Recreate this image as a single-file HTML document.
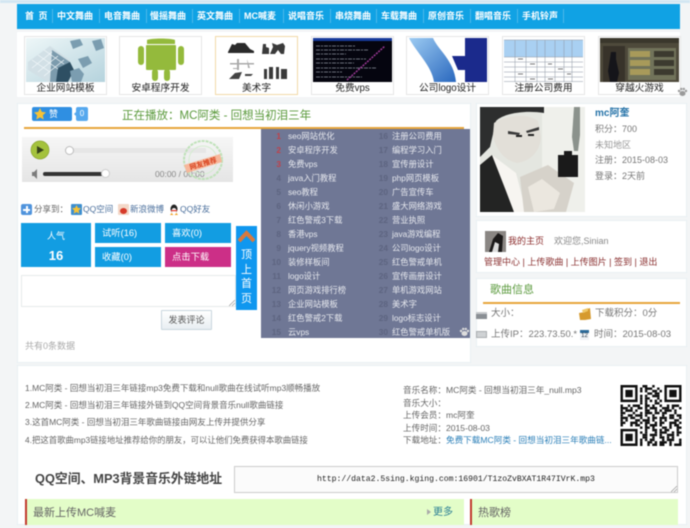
<!DOCTYPE html>
<html lang="zh"><head><meta charset="utf-8"><title>MC阿类 - 回想当初泪三年</title>
<style>
html,body{margin:0;padding:0;width:690px;height:528px;overflow:hidden;background:#f3f5f6}
#w{position:relative;width:690px;height:528px;overflow:hidden;font-family:"Liberation Sans","Noto Sans CJK SC",sans-serif;font-size:9px;color:#777;filter:blur(.4px)}
#w div,#w span,#w svg{position:absolute}
.t{white-space:nowrap;line-height:12px;height:12px}
.n{top:6px;color:#fff;font-weight:bold;font-size:9px}
.s{top:5px;width:1px;height:14px;background:#4db8ea}
.th{top:36px;width:81px;height:57px;background:#fff;border:1px solid #e6e6e6}
.th svg{left:1px;top:1px}
.c{left:0;right:0;top:45px;text-align:center;color:#222;font-size:9.7px;line-height:13px;white-space:nowrap}
.p{background:#fff;border:1px solid #e9f0f3;box-sizing:border-box}
.b{background:#129de2;color:#fff;font-size:9.3px;line-height:20px}
.pl{font-size:8.3px;color:#e6e8ee;white-space:nowrap;line-height:12px}
.pn{font-size:8.3px;color:#5d6480;font-weight:bold;text-align:right;width:14px;line-height:12px}
</style></head><body><div id="w">
<div style="left:0;top:0;width:690px;height:3px;background:#d3e6f2"></div>
<div style="left:17px;top:4px;width:663px;height:25px;background:#10a2e4"></div>
<div style="left:17px;top:4px;width:663px;height:25px">
<span class="t n" style="left:8px;letter-spacing:1px">首 页</span><span class="s" style="left:35px"></span>
<span class="t n" style="left:40px">中文舞曲</span><span class="s" style="left:82px"></span>
<span class="t n" style="left:87px">电音舞曲</span><span class="s" style="left:129px"></span>
<span class="t n" style="left:133px">慢摇舞曲</span><span class="s" style="left:175px"></span>
<span class="t n" style="left:180px">英文舞曲</span><span class="s" style="left:222px"></span>
<span class="t n" style="left:227px">MC喊麦</span><span class="s" style="left:266px"></span>
<span class="t n" style="left:271px">说唱音乐</span><span class="s" style="left:313px"></span>
<span class="t n" style="left:318px">串烧舞曲</span><span class="s" style="left:359px"></span>
<span class="t n" style="left:364px">车载舞曲</span><span class="s" style="left:406px"></span>
<span class="t n" style="left:411px">原创音乐</span><span class="s" style="left:453px"></span>
<span class="t n" style="left:458px">翻唱音乐</span><span class="s" style="left:500px"></span>
<span class="t n" style="left:505px">手机铃声</span><span class="s" style="left:546px"></span>
</div>
<div style="left:17px;top:32px;width:663px;height:65px;background:#fff"></div>

<div class="th" style="left:24px"><svg width="79" height="44" viewBox="0 0 79 44"><defs><linearGradient id="g1" x1="0" y1="0" x2="1" y2="1"><stop offset="0" stop-color="#eef7f8"/><stop offset="1" stop-color="#b5d3dd"/></linearGradient></defs><rect width="79" height="44" fill="url(#g1)"/><path d="M2 24L24 8 44 22 44 44 22 44 2 32z" fill="#d2e0e6"/><path d="M26 12L44 24 40 44 24 44z" fill="#7c9bad"/><path d="M32 30l12-6 4 8-6 12H30z" fill="#2e4f63"/><path d="M44 3l10-2 3 6-10 4zM66 3l9-2 3 9-8 3zM52 21l10-3 4 7-9 5zM44 33l9-3 5 6-3 8h-9z" fill="#7b9db0"/><path d="M6 22l18 12M12 17l20 14M18 12l20 14M6 30L26 14M12 34L32 18M18 38L38 22" stroke="#f2f8fa" stroke-width=".7" fill="none"/></svg><div class="c">企业网站模板</div></div>

<div class="th" style="left:119px"><svg width="79" height="44" viewBox="0 0 79 44"><rect width="79" height="44" fill="#fff"/><path d="M26 2c4-2 24-2 28 0v4H26z" fill="#94ba3c"/><rect x="25" y="7" width="30" height="25" rx="1" fill="#94ba3c"/><rect x="17" y="8" width="6" height="19" rx="3" fill="#94ba3c"/><rect x="57" y="8" width="6" height="19" rx="3" fill="#94ba3c"/><rect x="31" y="31" width="6" height="12" rx="3" fill="#94ba3c"/><rect x="43" y="31" width="6" height="12" rx="3" fill="#94ba3c"/></svg><div class="c">安卓程序开发</div></div>

<div class="th" style="left:215px;border-color:#f2d9a8"><svg width="79" height="44" viewBox="0 0 79 44"><rect width="79" height="44" fill="#fff"/><path d="M11 14l4-8 3 1 2-2h8l5 6 4 2v2H11z" fill="#2a2a2a"/><path d="M46 6h3v3l3 1v6h-7zM55 5l5 2 6-2 2 3-1 8h-3l-3-4-3 4h-5l3-7z" fill="#3a3a3a"/><path d="M13 25h24v1.500H13zM20 21h2v11h-2zM30 21l3 9h-2zM16 30h6v1H16z" fill="#aaa"/><path d="M12 41l6-6 7-1-3 7zM28 36h8l-2 2h-6z" fill="#444"/><path d="M47 31h3v10h-3zM52 29h4v12h-4zM59 29h3v12h-3zM64 31h6v10h-6z" fill="#3a3a3a"/></svg><div class="c">美术字</div></div>

<div class="th" style="left:311px"><svg width="79" height="44" viewBox="0 0 79 44"><rect width="79" height="44" fill="#05050f"/><rect width="79" height="3" fill="#173a9a"/><path d="M3 8h40M3 12h52M3 16h30M3 21h50M3 25h38M3 30h60M3 34h26M3 39h46" stroke="#6a707c" stroke-width="1" stroke-dasharray="4 1 2 1" fill="none"/><path d="M34 42L72 8" stroke="#a13a9a" stroke-width="1.500" stroke-dasharray="2 1"/></svg><div class="c">免费vps</div></div>

<div class="th" style="left:406px"><svg width="79" height="44" viewBox="0 0 79 44"><defs><linearGradient id="g2" x1="0" y1="0" x2="1" y2="1"><stop offset="0" stop-color="#9ccbf2"/><stop offset="1" stop-color="#2a68be"/></linearGradient></defs><rect width="79" height="44" fill="#fff"/><path d="M1 0H25C30 12 46 22 48 44H26C24 28 8 14 1 0z" fill="url(#g2)"/><path d="M57 0H79V44H57V32H50L44 18H57z" fill="#1b2a8c"/></svg><div class="c">公司logo设计</div></div>

<div class="th" style="left:502px"><svg width="79" height="44" viewBox="0 0 79 44"><rect width="79" height="44" fill="#fff"/><rect y="2" width="79" height="17" fill="#a9d0f2"/><path d="M0 2h79M0 19h79M0 24h79M0 29h79M0 34h79M0 39h79M0 43.500h79M11 2v42M22 2v42M33 2v42M41 2v42M51 2v42M60 2v42M68 2v42" stroke="#8a95a2" stroke-width=".5"/><path d="M14 21h5M26 26h5M44 26h4M54 31h5M63 36h4M14 36h5M26 41h5M44 41h5" stroke="#777" stroke-width="1"/></svg><div class="c">注册公司费用</div></div>

<div class="th" style="left:598px"><svg width="79" height="44" viewBox="0 0 79 44"><rect width="79" height="44" fill="#4e4a3b"/><rect width="79" height="5" fill="#3a372c"/><rect x="3" y="8" width="22" height="36" fill="#38332a"/><path d="M11 14h5v7l3 14-2 9h-7l-2-11z" fill="#15151a"/><rect x="28" y="10" width="48" height="32" fill="#71735a"/><path d="M30 13h20v6H30zM30 22h20v6H30zM30 31h20v6H30z" fill="#a89a5a"/><path d="M54 13h20v6H54zM54 22h20v6H54zM54 31h20v6H54z" fill="#3c3a2f"/></svg><div class="c">穿越火游戏</div></div>
<svg width="11" height="11" viewBox="0 0 11 11" style="left:677px;top:86px"><g fill="#9a9a9a"><ellipse cx="5.500" cy="7.500" rx="3" ry="2.500"/><circle cx="2" cy="5" r="1.200"/><circle cx="4.200" cy="3" r="1.200"/><circle cx="6.800" cy="3" r="1.200"/><circle cx="9" cy="5" r="1.200"/></g></svg>

<!-- left panel -->
<div class="p" style="left:17px;top:103px;width:454px;height:260px"></div>
<div style="left:32px;top:107px;width:40px;height:14px;background:#2f8fe2;border-radius:2px"></div>
<svg width="12" height="12" viewBox="0 0 12 12" style="left:34px;top:108px"><path d="M6 0l1.800 3.900 4.200.5-3.100 2.900.8 4.200L6 9.400 2.300 11.500l.8-4.200L0 4.400l4.200-.5z" fill="#f6c236"/></svg>
<span class="t" style="left:49px;top:108px;color:#fff">赞</span>
<div style="left:76px;top:107px;width:12px;height:14px;background:#55a8ee;border-radius:2px;color:#fff;text-align:center;line-height:14px;font-size:8px">0</div>
<div style="left:74px;top:112px;width:0;height:0;border:2px solid transparent;border-right-color:#55a8ee;border-left:0"></div>
<span class="t" style="left:122px;top:110px;color:#5b9a3d;font-size:11.500px">正在播放：MC阿类 - 回想当初泪三年</span>
<div style="left:24px;top:127px;width:440px;height:2px;background:#e7a53c"></div>

<!-- player -->
<div style="left:22px;top:137px;width:211px;height:45px;background:linear-gradient(#f6f6f6,#e5e5e5)"></div>
<svg width="20" height="20" viewBox="0 0 20 20" style="left:30px;top:140px"><circle cx="10" cy="10" r="9" fill="#a4c23c" stroke="#89a52f" stroke-width=".7"/><path d="M7 6l7 4-7 4z" fill="#36421a"/></svg>
<div style="left:68px;top:148px;width:138px;height:5px;background:#e6e6e6"></div>
<div style="left:65px;top:146px;width:7px;height:7px;border-radius:50%;background:#fff;border:1px solid #bbb"></div>
<svg width="10" height="10" viewBox="0 0 10 10" style="left:31px;top:169px"><path d="M1 3h2l3-3v10L3 7H1z" fill="#7b7b7b"/></svg>
<div style="left:43px;top:172px;width:60px;height:4px;background:#333;border-radius:2px"></div>
<div style="left:101px;top:169px;width:7px;height:7px;border-radius:50%;background:#fff;border:1px solid #ccc"></div>
<span class="t" style="left:155px;top:168px;color:#888;font-size:8.500px">00:00 / 00:00</span>
<svg width="42" height="42" viewBox="0 0 42 42" style="left:182px;top:139px"><circle cx="21" cy="21" r="19" fill="none" stroke="#bfe2b9" stroke-width="2" stroke-dasharray="3 1"/><circle cx="21" cy="21" r="14" fill="none" stroke="#d5edd1" stroke-width="1"/><path d="M2 26l36-11 2 8-35 11z" fill="#f7b79a"/><text x="21" y="27" font-size="7" font-weight="bold" fill="#d8401c" text-anchor="middle" transform="rotate(-16 21 24)" font-family="Liberation Sans,Noto Sans CJK SC,sans-serif">网友推荐</text></svg>

<!-- share -->
<div style="left:21px;top:204px;width:11px;height:11px;background:#4f93dc;border-radius:2px"></div>
<div style="left:23px;top:209px;width:7px;height:1.500px;background:#fff"></div><div style="left:26px;top:206px;width:1.500px;height:7px;background:#fff"></div>
<span class="t" style="left:34px;top:203px;color:#666;font-size:8.500px">分享到：</span>
<div style="left:71px;top:204px;width:11px;height:11px;background:#3d8fd0;border-radius:1px"></div>
<svg width="9" height="9" viewBox="0 0 12 12" style="left:72px;top:205px"><path d="M6 0l1.800 3.900 4.200.5-3.100 2.900.8 4.200L6 9.400 2.300 11.500l.8-4.200L0 4.400l4.200-.5z" fill="#f6c236"/></svg>
<span class="t" style="left:83px;top:203px;color:#4a6f9c;font-size:8.500px">QQ空间</span>
<div style="left:118px;top:204px;width:11px;height:11px;background:#f3d8c8;border-radius:1px"></div><div style="left:120px;top:208px;width:7px;height:6px;background:#d63a2a;border-radius:50%"></div>
<span class="t" style="left:130px;top:203px;color:#4a6f9c;font-size:8.500px">新浪微博</span>
<svg width="12" height="12" viewBox="0 0 12 12" style="left:168px;top:204px"><ellipse cx="6" cy="5" rx="3.500" ry="4.500" fill="#222"/><ellipse cx="6" cy="7" rx="2.500" ry="3" fill="#fff"/><path d="M2 11h3.500L3.500 9zM10 11H6.500L8.500 9z" fill="#f0a020"/><rect x="3" y="6" width="6" height="1.200" fill="#e53a2a"/></svg>
<span class="t" style="left:180px;top:203px;color:#4a6f9c;font-size:8.500px">QQ好友</span>

<!-- buttons -->
<div class="b" style="left:21px;top:223px;width:70px;height:44px;text-align:center"><span class="t" style="left:0;right:0;top:7px;font-size:9px">人气</span><span class="t" style="left:0;right:0;top:26px;font-size:13px;font-weight:bold;height:14px;line-height:14px">16</span></div>
<div class="b" style="left:95px;top:223px;width:66px;height:20px;padding-left:7px;box-sizing:border-box">试听(16)</div>
<div class="b" style="left:165px;top:223px;width:66px;height:20px;padding-left:7px;box-sizing:border-box">喜欢(0)</div>
<div class="b" style="left:95px;top:247px;width:66px;height:20px;padding-left:7px;box-sizing:border-box">收藏(0)</div>
<div class="b" style="left:165px;top:247px;width:66px;height:20px;padding-left:7px;box-sizing:border-box;background:#cc2f87">点击下载</div>

<div style="left:21px;top:275px;width:215px;height:32px;background:#fff;border:1px solid #e6eaea;box-sizing:border-box"></div>
<svg width="6" height="6" viewBox="0 0 6 6" style="left:229px;top:300px"><path d="M0 6L6 0M3 6L6 3" stroke="#999" stroke-width=".7"/></svg>

<div style="left:236px;top:226px;width:21px;height:84px;background:#0f97ef"></div>
<svg width="17" height="13" viewBox="0 0 17 13" style="left:238px;top:230px"><path d="M1 11l7.500-8L16 11" fill="none" stroke="#d8793f" stroke-width="4"/></svg>
<div style="left:236px;top:248px;width:21px;color:#fff;font-size:11px;line-height:14.700px;text-align:center">顶<br>上<br>首<br>页</div>

<div style="left:161px;top:310px;width:51px;height:20px;background:linear-gradient(#fff,#e8eef2);border:1px solid #c9d6de;box-sizing:border-box;border-radius:1px;color:#555;text-align:center;line-height:18px;font-size:9px">发表评论</div>
<span class="t" style="left:25px;top:340px;color:#aaa;font-size:9px">共有0条数据</span>

<!-- playlist -->
<div style="left:261px;top:129px;width:209px;height:209px;background:#6f7795">
<div class="pn" style="left:6px;top:1px;color:#c0414a">1</div><div class="pl" style="left:27px;top:1px">seo网站优化</div>
<div class="pn" style="left:6px;top:15px;color:#c0414a">2</div><div class="pl" style="left:27px;top:15px">安卓程序开发</div>
<div class="pn" style="left:6px;top:29px;color:#c0414a">3</div><div class="pl" style="left:27px;top:29px">免费vps</div>
<div class="pn" style="left:6px;top:43px">4</div><div class="pl" style="left:27px;top:43px">java入门教程</div>
<div class="pn" style="left:6px;top:57px">5</div><div class="pl" style="left:27px;top:57px">seo教程</div>
<div class="pn" style="left:6px;top:71px">6</div><div class="pl" style="left:27px;top:71px">休闲小游戏</div>
<div class="pn" style="left:6px;top:85px">7</div><div class="pl" style="left:27px;top:85px">红色警戒3下载</div>
<div class="pn" style="left:6px;top:99px">8</div><div class="pl" style="left:27px;top:99px">香港vps</div>
<div class="pn" style="left:6px;top:113px">9</div><div class="pl" style="left:27px;top:113px">jquery视频教程</div>
<div class="pn" style="left:6px;top:127px">10</div><div class="pl" style="left:27px;top:127px">装修样板间</div>
<div class="pn" style="left:6px;top:141px">11</div><div class="pl" style="left:27px;top:141px">logo设计</div>
<div class="pn" style="left:6px;top:155px">12</div><div class="pl" style="left:27px;top:155px">网页游戏排行榜</div>
<div class="pn" style="left:6px;top:169px">13</div><div class="pl" style="left:27px;top:169px">企业网站模板</div>
<div class="pn" style="left:6px;top:183px">14</div><div class="pl" style="left:27px;top:183px">红色警戒2下载</div>
<div class="pn" style="left:6px;top:197px">15</div><div class="pl" style="left:27px;top:197px">云vps</div>
<div class="pn" style="left:113px;top:1px">16</div><div class="pl" style="left:131px;top:1px">注册公司费用</div>
<div class="pn" style="left:113px;top:15px">17</div><div class="pl" style="left:131px;top:15px">编程学习入门</div>
<div class="pn" style="left:113px;top:29px">18</div><div class="pl" style="left:131px;top:29px">宣传册设计</div>
<div class="pn" style="left:113px;top:43px">19</div><div class="pl" style="left:131px;top:43px">php网页模板</div>
<div class="pn" style="left:113px;top:57px">20</div><div class="pl" style="left:131px;top:57px">广告宣传车</div>
<div class="pn" style="left:113px;top:71px">21</div><div class="pl" style="left:131px;top:71px">盛大网络游戏</div>
<div class="pn" style="left:113px;top:85px">22</div><div class="pl" style="left:131px;top:85px">营业执照</div>
<div class="pn" style="left:113px;top:99px">23</div><div class="pl" style="left:131px;top:99px">java游戏编程</div>
<div class="pn" style="left:113px;top:113px">24</div><div class="pl" style="left:131px;top:113px">公司logo设计</div>
<div class="pn" style="left:113px;top:127px">25</div><div class="pl" style="left:131px;top:127px">红色警戒单机</div>
<div class="pn" style="left:113px;top:141px">26</div><div class="pl" style="left:131px;top:141px">宣传画册设计</div>
<div class="pn" style="left:113px;top:155px">27</div><div class="pl" style="left:131px;top:155px">单机游戏网站</div>
<div class="pn" style="left:113px;top:169px">28</div><div class="pl" style="left:131px;top:169px">美术字</div>
<div class="pn" style="left:113px;top:183px">29</div><div class="pl" style="left:131px;top:183px">logo标志设计</div>
<div class="pn" style="left:113px;top:197px">30</div><div class="pl" style="left:131px;top:197px">红色警戒单机版</div>
<svg width="11" height="11" viewBox="0 0 11 11" style="left:198px;top:197px"><g fill="#ddd"><ellipse cx="5.500" cy="7.500" rx="3" ry="2.500"/><circle cx="2" cy="5" r="1.200"/><circle cx="4.200" cy="3" r="1.200"/><circle cx="6.800" cy="3" r="1.200"/><circle cx="9" cy="5" r="1.200"/></g></svg>
</div>

<!-- right panels -->
<div class="p" style="left:476px;top:103px;width:211px;height:114px"></div>
<svg width="105" height="105" viewBox="0 0 105 105" style="left:480px;top:107px"><rect width="105" height="105" fill="#e4e6e0"/><path d="M62 0h43v105H62z" fill="#eff0eb"/><path d="M0 0h64v6C46 3 24 6 16 14L10 40 0 50z" fill="#2d2e2e"/><path d="M14 16c12-8 34-10 44-2l3 16c-1 14-10 24-24 26-12-2-22-14-24-28z" fill="#e2dfd8"/><path d="M28 24l12 2-1 2-11-1zM46 24l13-4 0 3-12 3z" fill="#3a3a3a"/><path d="M36 28h6v2h-6zM48 27h6v2h-6z" fill="#222"/><path d="M0 58L12 48 30 92 34 105H0z" fill="#232423"/><path d="M12 48L36 66 46 105H34L26 84z" fill="#f7f5f1"/><path d="M40 70l28-12 26 18-8 29H44z" fill="#d6d2ca"/><path d="M78 48h6v-4h8v4h6v22H78z" fill="#1a1a1a"/><path d="M94 0h6v28l-2 16h-4l-2-14z" fill="#8b928c"/><path d="M48 80l14-8 18 14-6 16-20 3z" fill="#ebe7df"/></svg>
<span class="t" style="left:595px;top:108px;color:#2673a8;font-weight:bold;font-size:10px">mc阿奎</span>
<span class="t" style="left:595px;top:123px;font-size:9px">积分：700</span>
<span class="t" style="left:595px;top:139px;font-size:9px;color:#999">未知地区</span>
<span class="t" style="left:595px;top:154px;font-size:9px">注册：2015-08-03</span>
<span class="t" style="left:595px;top:170px;font-size:9px">登录：2天前</span>

<div class="p" style="left:476px;top:220px;width:211px;height:53px"></div>
<svg width="21" height="21" viewBox="0 0 21 21" style="left:485px;top:231px"><rect width="21" height="21" fill="#8a8683"/><path d="M4 21L8 8l5-6 5 3-1 16z" fill="#1c1a1a"/><path d="M7 21l3-10 4 2-1 8z" fill="#dcdcdc"/></svg>
<span class="t" style="left:508px;top:235px;color:#8a2a2a;font-size:9px">我的主页</span>
<span class="t" style="left:554px;top:235px;color:#888;font-size:9px">欢迎您,Sinian</span>
<span class="t" style="left:484px;top:256px;color:#8a3030;font-size:9px">管理中心 | 上传歌曲 | 上传图片 | 签到 | 退出</span>

<div class="p" style="left:476px;top:278px;width:211px;height:69px"></div>
<span class="t" style="left:490px;top:284px;color:#5b9a3d;font-size:11px">歌曲信息</span>
<div style="left:483px;top:302px;width:197px;height:1.500px;background:#e7a53c"></div>
<div style="left:476px;top:312px;width:11px;height:5px;background:#8a8f94;border-top:2px solid #c6c9cc"></div>
<span class="t" style="left:491px;top:308px;font-size:9.500px">大小：</span>
<svg width="12" height="12" viewBox="0 0 12 12" style="left:579px;top:308px"><path d="M0 5l6-1v8H1zM6 2l5-2 1 11-6 1z" fill="#d69a2e"/><path d="M3 2l6-2v3l-5 2z" fill="#f0c868"/></svg>
<span class="t" style="left:595px;top:308px;font-size:9.500px">下载积分：0分</span>
<div style="left:476px;top:331px;width:11px;height:7px;background:#cfd2d4;border:1px solid #a9adb0;box-sizing:border-box"></div>
<span class="t" style="left:491px;top:329px;font-size:9.500px">上传IP：223.73.50.*</span>
<div style="left:580px;top:330px;width:9px;height:10px;background:#eef2f6;border-top:3px solid #2a6a9a;box-sizing:border-box;color:#234;font-size:6px;line-height:7px;text-align:center">12</div>
<span class="t" style="left:594px;top:329px;font-size:9.500px">时间：2015-08-03</span>

<!-- bottom -->
<div class="p" style="left:17px;top:365px;width:670px;height:160px"></div>
<span class="t" style="left:25px;top:382px;color:#666;font-size:8.500px">1.MC阿类 - 回想当初泪三年链接mp3免费下载和null歌曲在线试听mp3顺畅播放</span>
<span class="t" style="left:25px;top:399px;color:#666;font-size:8.500px">2.MC阿类 - 回想当初泪三年链接外链到QQ空间背景音乐null歌曲链接</span>
<span class="t" style="left:25px;top:416px;color:#666;font-size:8.500px">3.这首MC阿类 - 回想当初泪三年歌曲链接由网友上传并提供分享</span>
<span class="t" style="left:25px;top:434px;color:#666;font-size:8.400px">4.把这首歌曲mp3链接地址推荐给你的朋友，可以让他们免费获得本歌曲链接</span>

<span class="t" style="left:403px;top:384px;color:#666;font-size:8.600px">音乐名称：MC阿类 - 回想当初泪三年_null.mp3</span>
<span class="t" style="left:403px;top:397px;color:#666;font-size:8.600px">音乐大小：</span>
<span class="t" style="left:403px;top:409px;color:#666;font-size:8.600px">上传会员：mc阿奎</span>
<span class="t" style="left:403px;top:422px;color:#666;font-size:8.600px">上传时间：2015-08-03</span>
<span class="t" style="left:403px;top:434px;color:#666;font-size:8.600px">下载地址：<span style="position:static;color:#2b7fb8">免费下载MC阿类 - 回想当初泪三年歌曲链...</span></span>

<svg width="62" height="61" viewBox="0 0 25 25" style="left:620px;top:385px"><g stroke="#111" stroke-width="1" fill="none">
<path d="M0 .5h25" stroke-dasharray="1 2 3 1 1 1 2 2 1 3 2 1"/><path d="M0 1.500h25" stroke-dasharray="2 1 1 3 2 1 3 2 1 1"/><path d="M0 2.500h25" stroke-dasharray="1 1 2 2 3 1 1 2 2 1"/><path d="M0 3.500h25" stroke-dasharray="3 2 1 1 1 3 2 1 2 2"/><path d="M0 4.500h25" stroke-dasharray="1 3 2 1 2 1 1 2 3 1"/><path d="M0 5.500h25" stroke-dasharray="2 2 1 1 3 1 2 3 1 1"/><path d="M0 6.500h25" stroke-dasharray="1 1 1 1 1 1 1 1 1 1"/><path d="M0 7.500h25" stroke-dasharray="2 1 3 2 1 1 1 3 2 1"/><path d="M0 8.500h25" stroke-dasharray="1 2 1 1 3 2 2 1 1 2"/><path d="M0 9.500h25" stroke-dasharray="3 1 1 2 2 1 1 1 3 2"/><path d="M0 10.500h25" stroke-dasharray="1 1 3 1 1 3 2 2 1 1"/><path d="M0 11.500h25" stroke-dasharray="2 3 1 2 1 1 3 1 2 1"/><path d="M0 12.500h25" stroke-dasharray="1 2 2 1 3 1 1 2 1 3"/><path d="M0 13.500h25" stroke-dasharray="3 1 2 2 1 2 1 1 2 1"/><path d="M0 14.500h25" stroke-dasharray="1 1 1 3 2 1 3 1 1 2"/><path d="M0 15.500h25" stroke-dasharray="2 2 3 1 1 1 2 2 1 1"/><path d="M0 16.500h25" stroke-dasharray="1 3 1 1 2 2 1 1 3 1"/><path d="M0 17.500h25" stroke-dasharray="2 1 1 2 3 1 2 1 1 3"/><path d="M0 18.500h25" stroke-dasharray="1 1 2 3 1 2 1 2 2 1"/><path d="M0 19.500h25" stroke-dasharray="3 2 1 1 2 1 1 3 1 1"/><path d="M0 20.500h25" stroke-dasharray="1 2 3 1 1 1 2 1 3 1"/><path d="M0 21.500h25" stroke-dasharray="2 1 1 1 1 3 2 2 1 2"/><path d="M0 22.500h25" stroke-dasharray="1 1 3 2 2 1 1 1 2 3"/><path d="M0 23.500h25" stroke-dasharray="3 1 1 3 1 2 2 1 1 1"/><path d="M0 24.500h25" stroke-dasharray="2 2 1 1 3 2 1 1 2 1"/></g>
<g fill="#fff"><rect width="8" height="8"/><rect x="17" width="8" height="8"/><rect y="17" width="8" height="8"/></g>
<g fill="#111"><path fill-rule="evenodd" d="M0 0h7v7H0zM1 1v5h5V1z"/><path d="M2 2h3v3H2z"/><path fill-rule="evenodd" d="M18 0h7v7h-7zM19 1v5h5V1z"/><path d="M20 2h3v3h-3z"/><path fill-rule="evenodd" d="M0 18h7v7H0zM1 19v5h5v-5z"/><path d="M2 20h3v3H2z"/></g></svg>

<span class="t" style="left:35px;top:471px;color:#444;font-weight:bold;font-size:12.800px;height:16px;line-height:16px">QQ空间、MP3背景音乐外链地址</span>
<div style="left:234px;top:466px;width:444px;height:27px;background:#fbfbfb;border:1px solid #ccc;box-sizing:border-box"></div>
<span class="t" style="left:317px;top:474px;font-family:'Liberation Mono',monospace;font-size:8.150px;color:#222">http://data2.5sing.kging.com:16901/T1zoZvBXAT1R47IVrK.mp3</span>
<svg width="6" height="6" viewBox="0 0 6 6" style="left:671px;top:486px"><path d="M0 6L6 0M3 6L6 3" stroke="#999" stroke-width=".7"/></svg>

<div style="left:25px;top:499px;width:439px;height:26px;background:#e3fdc8;border-left:2px solid #c0392b;box-sizing:border-box"></div>
<span class="t" style="left:33px;top:506px;color:#666;font-size:11px;height:14px;line-height:14px">最新上传MC喊麦</span>
<div style="left:427px;top:509px;width:0;height:0;border:3px solid transparent;border-left:4px solid #aaa;border-right:0"></div>
<span class="t" style="left:433px;top:506px;color:#2b7f94;font-size:10px;height:14px;line-height:14px">更多</span>
<div style="left:470px;top:499px;width:208px;height:26px;background:#e3fdc8;border-left:2px solid #c0392b;box-sizing:border-box"></div>
<span class="t" style="left:478px;top:506px;color:#666;font-size:11px;height:14px;line-height:14px">热歌榜</span>
</div></body></html>
